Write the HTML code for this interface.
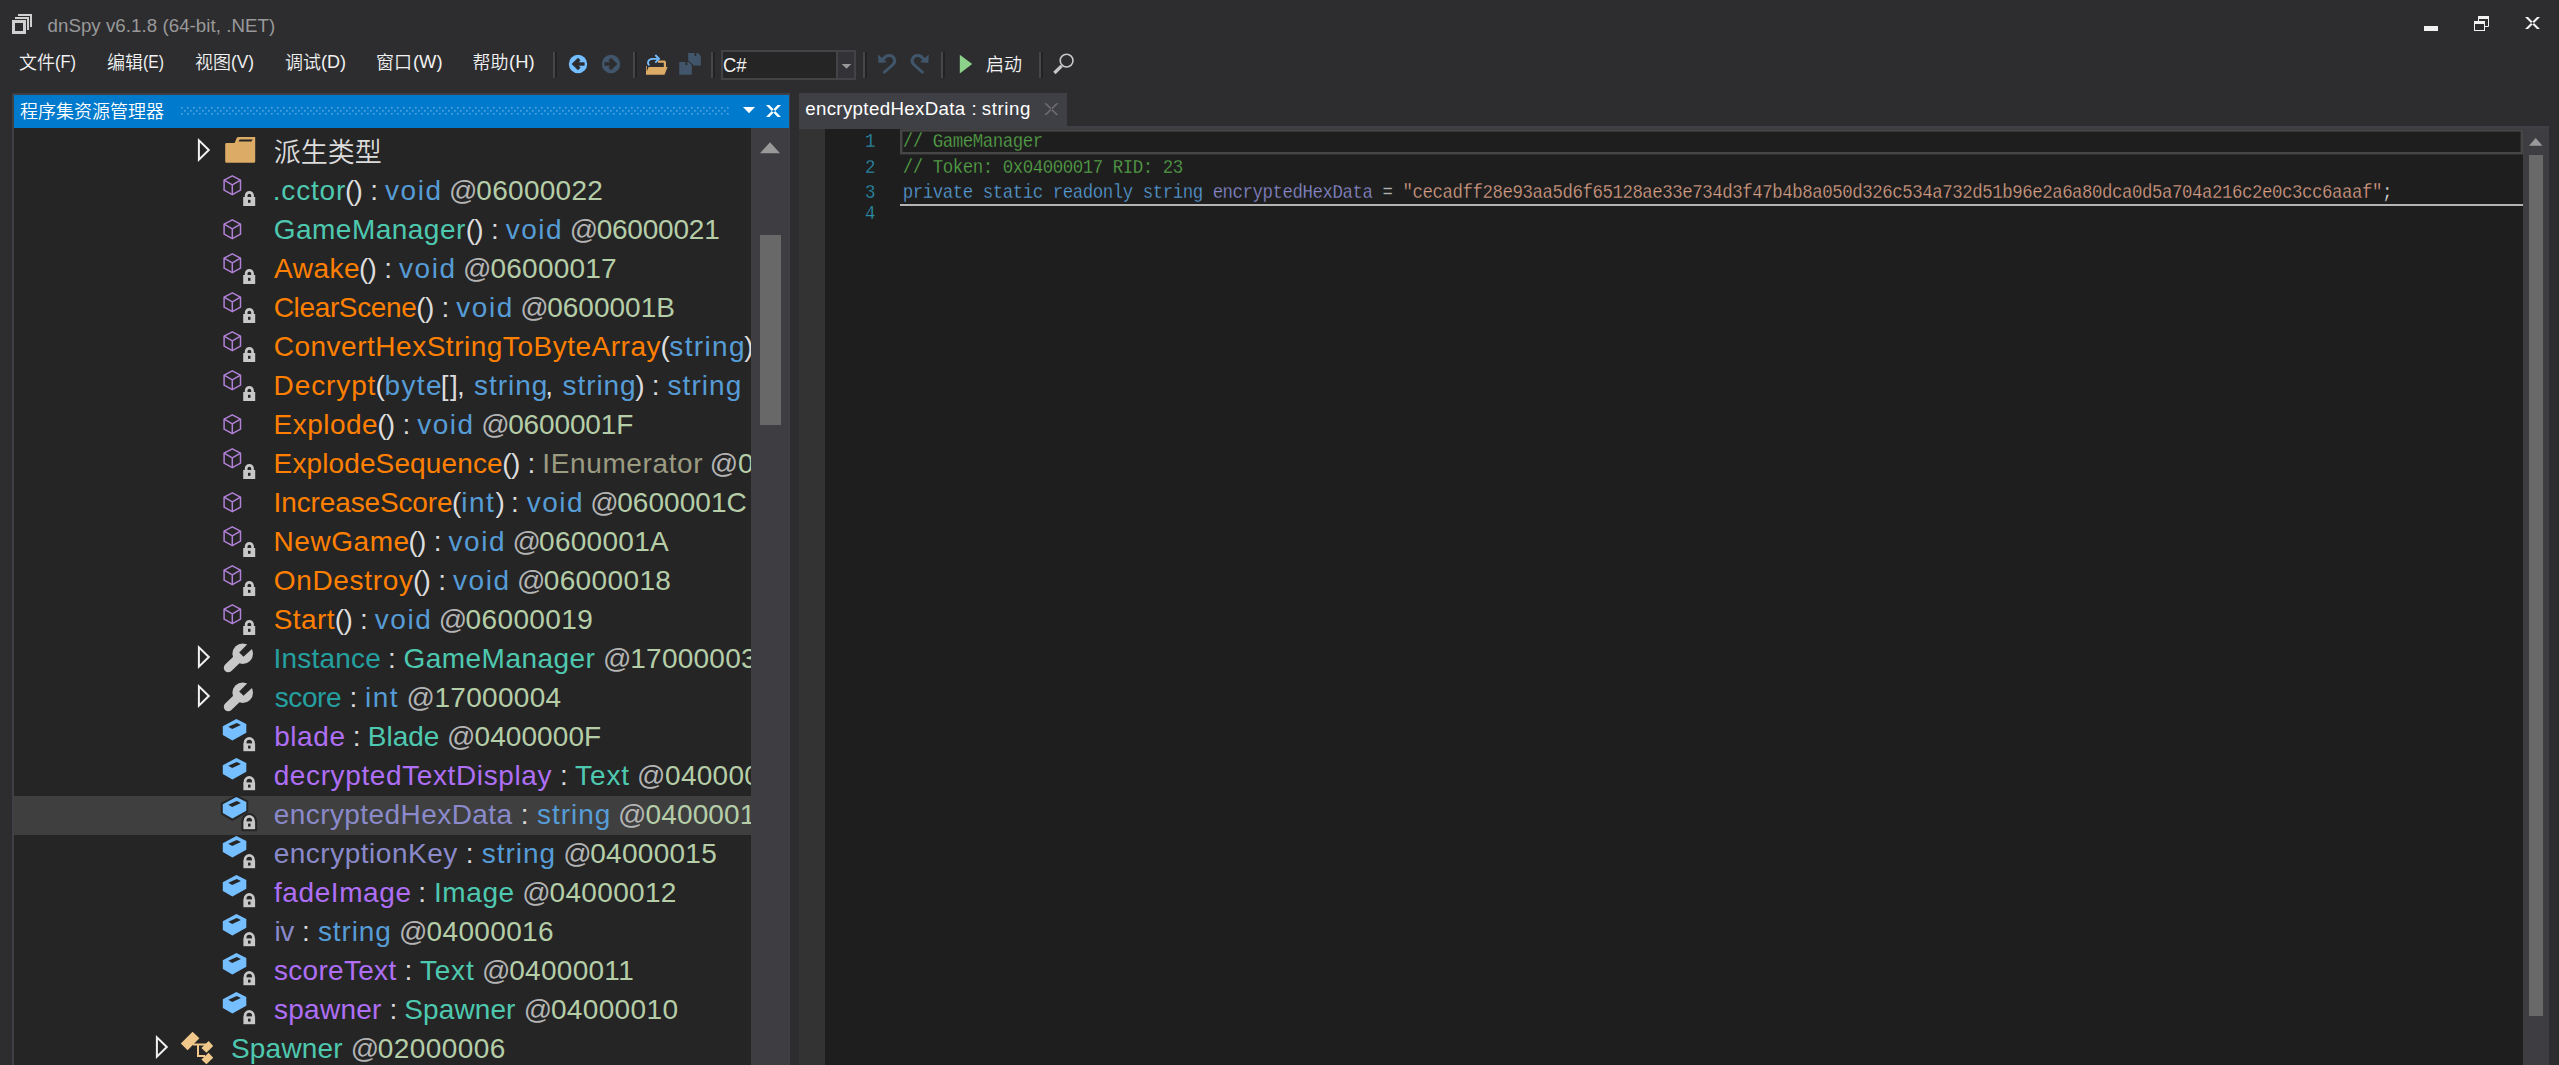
<!DOCTYPE html>
<html lang="zh-CN"><head><meta charset="utf-8"><title>dnSpy v6.1.8 (64-bit, .NET)</title>
<style>
html,body{margin:0;padding:0;background:#2d2d30}
body{width:2559px;height:1065px;position:relative;overflow:hidden;font-family:"Liberation Sans", sans-serif}
#shapes{position:absolute;left:0;top:0}
.ln{position:absolute;white-space:pre;font-family:"Liberation Sans", sans-serif}
#tree{position:absolute;left:0;top:128px;width:751px;height:937px;overflow:hidden}
.c{position:absolute;white-space:pre;font-family:"Liberation Mono", monospace;font-size:17.4px;line-height:24px;letter-spacing:-0.442px;transform:scaleY(1.16);transform-origin:0 16.65px;-webkit-text-stroke:0.25px #1e1e1e}
</style></head>
<body>
<svg id="shapes" width="2559" height="1065" viewBox="0 0 2559 1065">
<g fill="none" stroke="#d0d0d0"><rect x="13.5" y="21.5" width="11" height="11" stroke-width="3"/><path d="M15 18H28V30" stroke-width="2"/><path d="M18 15H31V27" stroke-width="2"/></g>
<rect x="2424" y="26" width="14" height="5" fill="#f1f1f1" />
<g fill="none" stroke="#f1f1f1" stroke-width="1"><rect x="2474.5" y="21.5" width="10" height="9"/><rect x="2474" y="21" width="11" height="3" fill="#f1f1f1" stroke="none"/><path d="M2478.5 21V16.5H2488.5V26.5H2485"/><rect x="2478" y="16" width="11" height="3" fill="#f1f1f1" stroke="none"/></g>
<path d="M2525 17H2528L2540 29H2537ZM2540 17H2537L2525 29H2528Z" fill="#f1f1f1"/>
<rect x="553" y="52" width="2" height="26" fill="#46464a" />
<rect x="555" y="52" width="2" height="26" fill="#222224" />
<rect x="633" y="52" width="2" height="26" fill="#46464a" />
<rect x="635" y="52" width="2" height="26" fill="#222224" />
<rect x="711" y="52" width="2" height="26" fill="#46464a" />
<rect x="713" y="52" width="2" height="26" fill="#222224" />
<rect x="863" y="52" width="2" height="26" fill="#46464a" />
<rect x="865" y="52" width="2" height="26" fill="#222224" />
<rect x="941" y="52" width="2" height="26" fill="#46464a" />
<rect x="943" y="52" width="2" height="26" fill="#222224" />
<rect x="1039" y="52" width="2" height="26" fill="#46464a" />
<rect x="1041" y="52" width="2" height="26" fill="#222224" />
<circle cx="578" cy="64" r="9.2" fill="#75beff"/><path d="M571.6 64L578 57.8L580.6 60.4L578.6 62.3H584.6V65.7H578.6L580.6 67.6L578 70.2Z" fill="#2d2d30"/>
<circle cx="611" cy="64" r="9.2" fill="#41566b"/><path d="M617.4 64L611 57.8L608.4 60.4L610.4 62.3H604.4V65.7H610.4L608.4 67.6L611 70.2Z" fill="#2d2d30"/>
<g><path d="M646 66V74.8H664.5L667.6 67H666V62.5Q666 60.6 664.4 60.6H658V62.8H663.8V67H648.6L646.8 71.5V66Z" fill="#dcab65"/><path d="M649.3 65.3C646.5 62.6 648.5 58.8 652.5 58.8H657.5" fill="none" stroke="#75beff" stroke-width="1.8"/><path d="M655.3 55L659 58.8L655.3 62.6" fill="none" stroke="#75beff" stroke-width="1.8"/></g>
<path d="M688.2 53H697.8000000000001L700.8000000000001 56V65.6H688.2Z" fill="#41566b"/><rect x="694.5" y="53" width="1.8" height="3" fill="#2d2d30"/>
<rect x="677.8" y="60.6" width="15" height="15" fill="#2d2d30" opacity="0"/>
<path d="M678.3 61H689L693 64.5V76H678.3Z" fill="#2d2d30"/>
<path d="M679.2 62.1H688.8000000000001L691.8000000000001 65.1V74.7H679.2Z" fill="#41566b"/><rect x="685.5" y="62.1" width="1.8" height="3" fill="#2d2d30"/>
<rect x="721" y="50" width="135" height="30" fill="#434346" />
<rect x="723" y="52" width="113" height="26" fill="#252526" />
<rect x="838" y="52" width="16" height="26" fill="#333337" />
<path d="M841.7 63.9H851.3L846.5 68.8Z" fill="#999999"/>
<g fill="none" stroke="#41566b" stroke-width="3"><path d="M883.5 73L893 64.5C896.8 60.8 893.5 55.6 889.5 55.6C886.5 55.6 884 57.6 882.8 60"/><path d="M923.3 73L913.8 64.5C910 60.8 913.3 55.6 917.3 55.6C920.3 55.6 922.8 57.6 924 60"/></g><path d="M878 54.5L878.5 63L887 62.2Z" fill="#41566b"/><path d="M928.8 54.5L928.3 63L919.8 62.2Z" fill="#41566b"/>
<path d="M959.8 54.8V73.4L972.2 64.1Z" fill="#8dd28a"/>
<circle cx="1066.6" cy="60.6" r="6.4" fill="none" stroke="#c8c8c8" stroke-width="1.6"/><path d="M1061.6 65.8L1054.4 73" stroke="#c8c8c8" stroke-width="3.2" fill="none"/>
<rect x="12" y="93" width="778" height="972" fill="#3f3f46" />
<rect x="14" y="95" width="775" height="33" fill="#007acc" />
<rect x="14" y="128" width="737" height="937" fill="#252526" />
<rect x="751" y="128" width="38" height="937" fill="#3e3e42" />
<defs><pattern id="grip" x="181" y="107" width="6" height="6" patternUnits="userSpaceOnUse"><rect x="0" y="0" width="1.6" height="1.6" fill="#55a6de"/><rect x="3" y="3" width="1.6" height="1.6" fill="#55a6de"/></pattern></defs><rect x="181" y="107" width="548.6" height="8" fill="url(#grip)"/>
<path d="M743 107H755L749 113.2Z" fill="#ffffff"/>
<path d="M766 105H769.4L781 117H777.6ZM781 105H777.6L766 117H769.4Z" fill="#ffffff"/>
<path d="M760 153.2L770 142.3L780 153.2Z" fill="#999999"/>
<rect x="760" y="235" width="21" height="190" fill="#686868" />
<rect x="14" y="796" width="737" height="39" fill="#3f3f40" />
<path d="M198.9 140.3V159.7L208.8 150Z" fill="none" stroke="#f1f1f1" stroke-width="2" stroke-linejoin="miter"/>
<path d="M226.6 143H234.6L236.6 138.2Q237 137 238.4 137H255.2V161.4Q255.2 162.8 253.8 162.8H226.6Q225.2 162.8 225.2 161.4V144.4Q225.2 143 226.6 143Z" fill="#dcab65"/><path d="M239.6 139.6H252.6L251.4 141.6H238.6Z" fill="#252526"/>
<g fill="none" stroke="#b180d7" stroke-width="1.5" stroke-linejoin="round"><path d="M232.3 175.8L240.5 180.2V190.2L232.3 194.7L224.1 190.2V180.2Z"/><path d="M224.1 180.2L232.3 184.8L240.5 180.2M232.3 184.8V194.7"/></g>
<g><rect x="243.2" y="197" width="12" height="9" fill="#c8c8c8"/><path d="M246.15 198V195.55A3.200000000000003 3.200000000000003 0 0 1 252.55 195.55V198" fill="none" stroke="#c8c8c8" stroke-width="2.7"/><rect x="248.0" y="199.8" width="2.5" height="3" fill="#252526"/></g>
<g fill="none" stroke="#b180d7" stroke-width="1.5" stroke-linejoin="round"><path d="M232.3 219.8L240.5 224.2V234.2L232.3 238.7L224.1 234.2V224.2Z"/><path d="M224.1 224.2L232.3 228.8L240.5 224.2M232.3 228.8V238.7"/></g>
<g fill="none" stroke="#b180d7" stroke-width="1.5" stroke-linejoin="round"><path d="M232.3 253.8L240.5 258.2V268.2L232.3 272.7L224.1 268.2V258.2Z"/><path d="M224.1 258.2L232.3 262.8L240.5 258.2M232.3 262.8V272.7"/></g>
<g><rect x="243.2" y="275" width="12" height="9" fill="#c8c8c8"/><path d="M246.15 276V273.55A3.200000000000003 3.200000000000003 0 0 1 252.55 273.55V276" fill="none" stroke="#c8c8c8" stroke-width="2.7"/><rect x="248.0" y="277.8" width="2.5" height="3" fill="#252526"/></g>
<g fill="none" stroke="#b180d7" stroke-width="1.5" stroke-linejoin="round"><path d="M232.3 292.8L240.5 297.2V307.2L232.3 311.7L224.1 307.2V297.2Z"/><path d="M224.1 297.2L232.3 301.8L240.5 297.2M232.3 301.8V311.7"/></g>
<g><rect x="243.2" y="314" width="12" height="9" fill="#c8c8c8"/><path d="M246.15 315V312.55A3.200000000000003 3.200000000000003 0 0 1 252.55 312.55V315" fill="none" stroke="#c8c8c8" stroke-width="2.7"/><rect x="248.0" y="316.8" width="2.5" height="3" fill="#252526"/></g>
<g fill="none" stroke="#b180d7" stroke-width="1.5" stroke-linejoin="round"><path d="M232.3 414.8L240.5 419.2V429.2L232.3 433.7L224.1 429.2V419.2Z"/><path d="M224.1 419.2L232.3 423.8L240.5 419.2M232.3 423.8V433.7"/></g>
<g fill="none" stroke="#b180d7" stroke-width="1.5" stroke-linejoin="round"><path d="M232.3 526.8L240.5 531.2V541.2L232.3 545.7L224.1 541.2V531.2Z"/><path d="M224.1 531.2L232.3 535.8L240.5 531.2M232.3 535.8V545.7"/></g>
<g><rect x="243.2" y="548" width="12" height="9" fill="#c8c8c8"/><path d="M246.15 549V546.5500000000001A3.200000000000003 3.200000000000003 0 0 1 252.55 546.5500000000001V549" fill="none" stroke="#c8c8c8" stroke-width="2.7"/><rect x="248.0" y="550.8" width="2.5" height="3" fill="#252526"/></g>
<g fill="none" stroke="#b180d7" stroke-width="1.5" stroke-linejoin="round"><path d="M232.3 565.8L240.5 570.2V580.2L232.3 584.7L224.1 580.2V570.2Z"/><path d="M224.1 570.2L232.3 574.8L240.5 570.2M232.3 574.8V584.7"/></g>
<g><rect x="243.2" y="587" width="12" height="9" fill="#c8c8c8"/><path d="M246.15 588V585.5500000000001A3.200000000000003 3.200000000000003 0 0 1 252.55 585.5500000000001V588" fill="none" stroke="#c8c8c8" stroke-width="2.7"/><rect x="248.0" y="589.8" width="2.5" height="3" fill="#252526"/></g>
<g fill="none" stroke="#b180d7" stroke-width="1.5" stroke-linejoin="round"><path d="M232.3 604.8L240.5 609.2V619.2L232.3 623.7L224.1 619.2V609.2Z"/><path d="M224.1 609.2L232.3 613.8L240.5 609.2M232.3 613.8V623.7"/></g>
<g><rect x="243.2" y="626" width="12" height="9" fill="#c8c8c8"/><path d="M246.15 627V624.5500000000001A3.200000000000003 3.200000000000003 0 0 1 252.55 624.5500000000001V627" fill="none" stroke="#c8c8c8" stroke-width="2.7"/><rect x="248.0" y="628.8" width="2.5" height="3" fill="#252526"/></g>
<g fill="none" stroke="#b180d7" stroke-width="1.5" stroke-linejoin="round"><path d="M232.3 331.8L240.5 336.2V346.2L232.3 350.7L224.1 346.2V336.2Z"/><path d="M224.1 336.2L232.3 340.8L240.5 336.2M232.3 340.8V350.7"/></g>
<g><rect x="243.2" y="353" width="12" height="9" fill="#c8c8c8"/><path d="M246.15 354V351.55A3.200000000000003 3.200000000000003 0 0 1 252.55 351.55V354" fill="none" stroke="#c8c8c8" stroke-width="2.7"/><rect x="248.0" y="355.8" width="2.5" height="3" fill="#252526"/></g>
<g fill="none" stroke="#b180d7" stroke-width="1.5" stroke-linejoin="round"><path d="M232.3 370.8L240.5 375.2V385.2L232.3 389.7L224.1 385.2V375.2Z"/><path d="M224.1 375.2L232.3 379.8L240.5 375.2M232.3 379.8V389.7"/></g>
<g><rect x="243.2" y="392" width="12" height="9" fill="#c8c8c8"/><path d="M246.15 393V390.55A3.200000000000003 3.200000000000003 0 0 1 252.55 390.55V393" fill="none" stroke="#c8c8c8" stroke-width="2.7"/><rect x="248.0" y="394.8" width="2.5" height="3" fill="#252526"/></g>
<g fill="none" stroke="#b180d7" stroke-width="1.5" stroke-linejoin="round"><path d="M232.3 448.8L240.5 453.2V463.2L232.3 467.7L224.1 463.2V453.2Z"/><path d="M224.1 453.2L232.3 457.8L240.5 453.2M232.3 457.8V467.7"/></g>
<g><rect x="243.2" y="470" width="12" height="9" fill="#c8c8c8"/><path d="M246.15 471V468.55A3.200000000000003 3.200000000000003 0 0 1 252.55 468.55V471" fill="none" stroke="#c8c8c8" stroke-width="2.7"/><rect x="248.0" y="472.8" width="2.5" height="3" fill="#252526"/></g>
<g fill="none" stroke="#b180d7" stroke-width="1.5" stroke-linejoin="round"><path d="M232.3 492.8L240.5 497.2V507.2L232.3 511.7L224.1 507.2V497.2Z"/><path d="M224.1 497.2L232.3 501.8L240.5 497.2M232.3 501.8V511.7"/></g>
<path d="M198.9 647.3V666.7L208.8 657Z" fill="none" stroke="#f1f1f1" stroke-width="2" stroke-linejoin="miter"/>
<g><path d="M228.3 667.8L240 656.5" stroke="#c8c8c8" stroke-width="9" stroke-linecap="round" fill="none"/><circle cx="242.7" cy="653.7" r="10.3" fill="#c8c8c8"/><path d="M239.2 652.4L252.1 639.5L257.4 644L243.5 656.7Z" fill="#252526"/></g>
<path d="M198.9 686.3V705.7L208.8 696Z" fill="none" stroke="#f1f1f1" stroke-width="2" stroke-linejoin="miter"/>
<g><path d="M228.3 706.8L240 695.5" stroke="#c8c8c8" stroke-width="9" stroke-linecap="round" fill="none"/><circle cx="242.7" cy="692.7" r="10.3" fill="#c8c8c8"/><path d="M239.2 691.4L252.1 678.5L257.4 683L243.5 695.7Z" fill="#252526"/></g>
<path d="M236.4 719L246.3 724V732.8L232.4 740.6L222.8 735V726.2Z" fill="#75beff"/><path d="M228.3 726.7L236.8 722.9L240.9 724.9L232.2 729.1Z" fill="#252526"/>
<g><rect x="243.4" y="743.4" width="11.7" height="7.8" fill="#c8c8c8"/><path d="M245.1 744.4V742.55A4.150000000000006 4.150000000000006 0 0 1 253.4 742.55V744.4" fill="none" stroke="#c8c8c8" stroke-width="2.8"/><rect x="248.05" y="745.5999999999999" width="2.5" height="3" fill="#252526"/></g>
<path d="M236.4 758L246.3 763V771.8L232.4 779.6L222.8 774V765.2Z" fill="#75beff"/><path d="M228.3 765.7L236.8 761.9L240.9 763.9L232.2 768.1Z" fill="#252526"/>
<g><rect x="243.4" y="782.4" width="11.7" height="7.8" fill="#c8c8c8"/><path d="M245.1 783.4V781.55A4.150000000000006 4.150000000000006 0 0 1 253.4 781.55V783.4" fill="none" stroke="#c8c8c8" stroke-width="2.8"/><rect x="248.05" y="784.5999999999999" width="2.5" height="3" fill="#252526"/></g>
<path d="M236.4 797L246.3 802V810.8L232.4 818.6L222.8 813V804.2Z" fill="#75beff" stroke="#252526" stroke-width="4" paint-order="stroke" stroke-linejoin="miter"/><path d="M228.3 804.7L236.8 800.9L240.9 802.9L232.2 807.1Z" fill="#252526"/>
<g><path d="M245.1 822.4V820.55A4.150000000000006 4.150000000000006 0 0 1 253.4 820.55V822.4" fill="none" stroke="#252526" stroke-width="6.8"/><rect x="241.4" y="820.4" width="15.7" height="10.8" fill="#252526"/><rect x="243.4" y="821.4" width="11.7" height="7.8" fill="#c8c8c8"/><path d="M245.1 822.4V820.55A4.150000000000006 4.150000000000006 0 0 1 253.4 820.55V822.4" fill="none" stroke="#c8c8c8" stroke-width="2.8"/><rect x="248.05" y="823.5999999999999" width="2.5" height="3" fill="#252526"/></g>
<path d="M236.4 836L246.3 841V849.8L232.4 857.6L222.8 852V843.2Z" fill="#75beff"/><path d="M228.3 843.7L236.8 839.9L240.9 841.9L232.2 846.1Z" fill="#252526"/>
<g><rect x="243.4" y="860.4" width="11.7" height="7.8" fill="#c8c8c8"/><path d="M245.1 861.4V859.55A4.150000000000006 4.150000000000006 0 0 1 253.4 859.55V861.4" fill="none" stroke="#c8c8c8" stroke-width="2.8"/><rect x="248.05" y="862.5999999999999" width="2.5" height="3" fill="#252526"/></g>
<path d="M236.4 875L246.3 880V888.8L232.4 896.6L222.8 891V882.2Z" fill="#75beff"/><path d="M228.3 882.7L236.8 878.9L240.9 880.9L232.2 885.1Z" fill="#252526"/>
<g><rect x="243.4" y="899.4" width="11.7" height="7.8" fill="#c8c8c8"/><path d="M245.1 900.4V898.55A4.150000000000006 4.150000000000006 0 0 1 253.4 898.55V900.4" fill="none" stroke="#c8c8c8" stroke-width="2.8"/><rect x="248.05" y="901.5999999999999" width="2.5" height="3" fill="#252526"/></g>
<path d="M236.4 914L246.3 919V927.8L232.4 935.6L222.8 930V921.2Z" fill="#75beff"/><path d="M228.3 921.7L236.8 917.9L240.9 919.9L232.2 924.1Z" fill="#252526"/>
<g><rect x="243.4" y="938.4" width="11.7" height="7.8" fill="#c8c8c8"/><path d="M245.1 939.4V937.55A4.150000000000006 4.150000000000006 0 0 1 253.4 937.55V939.4" fill="none" stroke="#c8c8c8" stroke-width="2.8"/><rect x="248.05" y="940.5999999999999" width="2.5" height="3" fill="#252526"/></g>
<path d="M236.4 953L246.3 958V966.8L232.4 974.6L222.8 969V960.2Z" fill="#75beff"/><path d="M228.3 960.7L236.8 956.9L240.9 958.9L232.2 963.1Z" fill="#252526"/>
<g><rect x="243.4" y="977.4" width="11.7" height="7.8" fill="#c8c8c8"/><path d="M245.1 978.4V976.55A4.150000000000006 4.150000000000006 0 0 1 253.4 976.55V978.4" fill="none" stroke="#c8c8c8" stroke-width="2.8"/><rect x="248.05" y="979.5999999999999" width="2.5" height="3" fill="#252526"/></g>
<path d="M236.4 992L246.3 997V1005.8L232.4 1013.6L222.8 1008V999.2Z" fill="#75beff"/><path d="M228.3 999.7L236.8 995.9L240.9 997.9L232.2 1002.1Z" fill="#252526"/>
<g><rect x="243.4" y="1016.4" width="11.7" height="7.8" fill="#c8c8c8"/><path d="M245.1 1017.4V1015.55A4.150000000000006 4.150000000000006 0 0 1 253.4 1015.55V1017.4" fill="none" stroke="#c8c8c8" stroke-width="2.8"/><rect x="248.05" y="1018.5999999999999" width="2.5" height="3" fill="#252526"/></g>
<path d="M156.9 1037.3V1056.7L166.8 1047Z" fill="none" stroke="#f1f1f1" stroke-width="2" stroke-linejoin="miter"/>
<g fill="#f0c88c"><path d="M192.6 1031.8L199.4 1038.2L187.6 1050.2L180.8 1043.6Z"/><path d="M208.6 1041L213.2 1046L206.4 1052.8L201.4 1048Z"/><path d="M208.6 1052.8L213.2 1057.8L206.4 1064.2L201.4 1059.6Z"/><path d="M193 1043.4H207V1045.4H199V1055H205V1057H197V1045.4H193Z"/></g>
<rect x="799" y="93" width="268" height="34" fill="#3f3f46" />
<rect x="799" y="126" width="1750" height="3" fill="#3f3f46" />
<rect x="799" y="129" width="26" height="936" fill="#333333" />
<rect x="825" y="129" width="1698" height="936" fill="#1e1e1e" />
<rect x="2523" y="129" width="26" height="936" fill="#3e3e42" />
<path d="M1044.2 103.2H1046.5L1058.5 114.9H1056.2ZM1058.5 103.2H1056.2L1044.2 114.9H1046.5Z" fill="#6d6d70"/>
<rect x="901.2" y="130.4" width="1620.6" height="22.8" fill="none" stroke="#464646" stroke-width="2.4"/>
<rect x="900" y="204" width="1623" height="2" fill="#b4b4b4" />
<path d="M2529 145.8L2535.7 138L2542.4 145.8Z" fill="#999999"/>
<rect x="2529" y="155" width="14" height="861" fill="#686868" />
</svg>
<div id="chrome">
<div class="ln" style="left:47.50px;top:11.72px;font-size:18.7px;line-height:28px"><span style='color:#999999;letter-spacing:0.050px;'>dnSpy v6.1.8 (64-bit, .NET)</span></div>
<div class="ln" style="left:19.00px;top:48.86px;font-size:18px;line-height:27px"><span style='color:#f1f1f1;font-family:"Liberation Sans", "Noto Sans CJK SC", sans-serif;font-weight:350;'>文件</span><span style='margin-left:0.34px;color:#f1f1f1;font-size:19px;display:inline-block;line-height:27px;transform:scaleX(0.8634);transform-origin:0 0;position:relative;top:-0.60px;'>(F)</span> <span style='margin-left:22.40px;color:#f1f1f1;font-family:"Liberation Sans", "Noto Sans CJK SC", sans-serif;font-weight:350;'>编辑</span><span style='margin-left:0.38px;color:#f1f1f1;font-size:19px;display:inline-block;line-height:27px;transform:scaleX(0.8250);transform-origin:0 0;position:relative;top:-0.60px;'>(E)</span> <span style='margin-left:21.29px;color:#f1f1f1;font-family:"Liberation Sans", "Noto Sans CJK SC", sans-serif;font-weight:350;'>视图</span><span style='margin-left:0.29px;color:#f1f1f1;font-size:19px;display:inline-block;line-height:27px;transform:scaleX(0.9083);transform-origin:0 0;position:relative;top:-0.60px;'>(V)</span> <span style='margin-left:23.38px;color:#f1f1f1;font-family:"Liberation Sans", "Noto Sans CJK SC", sans-serif;font-weight:350;'>调试</span><span style='margin-left:0.25px;color:#f1f1f1;font-size:19px;display:inline-block;line-height:27px;transform:scaleX(0.9502);transform-origin:0 0;position:relative;top:-0.60px;'>(D)</span> <span style='margin-left:23.37px;color:#f1f1f1;font-family:"Liberation Sans", "Noto Sans CJK SC", sans-serif;font-weight:350;'>窗口</span><span style='margin-left:1.23px;color:#f1f1f1;font-size:19px;display:inline-block;line-height:27px;transform:scaleX(0.9672);transform-origin:0 0;position:relative;top:-0.60px;'>(W)</span> <span style='margin-left:23.67px;color:#f1f1f1;font-family:"Liberation Sans", "Noto Sans CJK SC", sans-serif;font-weight:350;'>帮助</span><span style='margin-left:0.23px;color:#f1f1f1;font-size:19px;display:inline-block;line-height:27px;transform:scaleX(0.9701);transform-origin:0 0;position:relative;top:-0.60px;'>(H)</span></div>
<div class="ln" style="left:723.36px;top:50.71px;font-size:19.6px;line-height:29px"><span style='color:#f1f1f1;display:inline-block;line-height:29px;transform:scaleX(0.9400);transform-origin:0 0;'>C#</span></div>
<div class="ln" style="left:986.00px;top:52.36px;font-size:18px;line-height:27px"><span style='color:#f1f1f1;font-family:"Liberation Sans", "Noto Sans CJK SC", sans-serif;font-weight:350;'>启动</span></div>
<div class="ln" style="left:805.20px;top:95.22px;font-size:18.7px;line-height:28px"><span style='color:#ffffff;letter-spacing:0.348px;'>encryptedHexData</span> <span style='margin-left:0.76px;color:#ffffff;'>:</span> <span style='margin-left:-0.19px;color:#ffffff;letter-spacing:0.619px;'>string</span></div>
<div class="ln" style="left:20.00px;top:98.56px;font-size:18px;line-height:27px"><span style='color:#ffffff;font-family:"Liberation Sans", "Noto Sans CJK SC", sans-serif;font-weight:350;'>程序集资源管理器</span></div>
</div>
<div id="tree">
<div class="ln" style="left:273.70px;top:5.34px;font-size:27px;line-height:40px"><span style='color:#dcdcdc;font-family:"Liberation Sans", "Noto Sans CJK SC", sans-serif;font-weight:350;'>派生类型</span></div>
<div class="ln" style="left:272.70px;top:41.50px;font-size:28px;line-height:42px"><span style='color:#4ec9b0;letter-spacing:0.834px;'>.cctor</span><span style='margin-left:-1.16px;color:#dcdcdc;letter-spacing:-0.724px;'>()</span> <span style='margin-left:0.31px;color:#dcdcdc;'>:</span> <span style='margin-left:-0.87px;color:#569cd6;letter-spacing:1.536px;'>void</span> <span style='margin-left:-1.29px;color:#b4b4b4;'>@</span><span style='margin-left:-1.12px;color:#b5cea8;letter-spacing:0.285px;'>06000022</span></div>
<div class="ln" style="left:273.70px;top:80.50px;font-size:28px;line-height:42px"><span style='color:#4ec9b0;letter-spacing:0.487px;'>GameManager</span><span style='margin-left:-0.11px;color:#dcdcdc;letter-spacing:-0.724px;'>()</span> <span style='margin-left:0.31px;color:#dcdcdc;'>:</span> <span style='margin-left:-0.87px;color:#569cd6;letter-spacing:1.536px;'>void</span> <span style='margin-left:-1.29px;color:#b4b4b4;'>@</span><span style='margin-left:-1.52px;color:#b5cea8;letter-spacing:-0.201px;'>06000021</span></div>
<div class="ln" style="left:274.00px;top:119.50px;font-size:28px;line-height:42px"><span style='color:#ff8000;letter-spacing:0.509px;'>Awake</span><span style='margin-left:-1.08px;color:#dcdcdc;letter-spacing:-0.724px;'>()</span> <span style='margin-left:0.31px;color:#dcdcdc;'>:</span> <span style='margin-left:-0.87px;color:#569cd6;letter-spacing:1.536px;'>void</span> <span style='margin-left:-1.29px;color:#b4b4b4;'>@</span><span style='margin-left:-0.92px;color:#b5cea8;letter-spacing:0.213px;'>06000017</span></div>
<div class="ln" style="left:273.70px;top:158.50px;font-size:28px;line-height:42px"><span style='color:#ff8000;letter-spacing:-0.348px;'>ClearScene</span><span style='margin-left:-0.22px;color:#dcdcdc;letter-spacing:-0.724px;'>()</span> <span style='margin-left:0.31px;color:#dcdcdc;'>:</span> <span style='margin-left:-0.87px;color:#569cd6;letter-spacing:1.536px;'>void</span> <span style='margin-left:-1.29px;color:#b4b4b4;'>@</span><span style='margin-left:-1.52px;color:#b5cea8;'>0600001B</span></div>
<div class="ln" style="left:273.70px;top:197.50px;font-size:28px;line-height:42px"><span style='color:#ff8000;letter-spacing:0.513px;'>ConvertHexStringToByteArray</span><span style='margin-left:-0.51px;color:#dcdcdc;'>(</span><span style='margin-left:-0.52px;color:#569cd6;letter-spacing:1.361px;'>string</span><span style='margin-left:-1.73px;color:#dcdcdc;'>)</span></div>
<div class="ln" style="left:273.60px;top:236.50px;font-size:28px;line-height:42px"><span style='color:#ff8000;letter-spacing:0.885px;'>Decrypt</span><span style='margin-left:-0.66px;color:#dcdcdc;'>(</span><span style='margin-left:-0.52px;color:#569cd6;letter-spacing:1.416px;'>byte</span><span style='margin-left:-2.29px;color:#dcdcdc;letter-spacing:1.521px;'>[]</span><span style='margin-left:-2.40px;color:#dcdcdc;'>,</span> <span style='margin-left:1.53px;color:#569cd6;letter-spacing:0.981px;'>string</span><span style='margin-left:-3.15px;color:#dcdcdc;'>,</span> <span style='margin-left:1.73px;color:#569cd6;letter-spacing:0.921px;'>string</span><span style='margin-left:-1.39px;color:#dcdcdc;'>)</span> <span style='margin-left:-0.51px;color:#dcdcdc;'>:</span> <span style='margin-left:0.13px;color:#569cd6;letter-spacing:1.081px;'>string</span></div>
<div class="ln" style="left:273.60px;top:275.50px;font-size:28px;line-height:42px"><span style='color:#ff8000;letter-spacing:0.464px;'>Explode</span><span style='margin-left:-0.84px;color:#dcdcdc;letter-spacing:-0.724px;'>()</span> <span style='margin-left:0.31px;color:#dcdcdc;'>:</span> <span style='margin-left:-0.87px;color:#569cd6;letter-spacing:1.536px;'>void</span> <span style='margin-left:-1.29px;color:#b4b4b4;'>@</span><span style='margin-left:-1.52px;color:#b5cea8;letter-spacing:-0.129px;'>0600001F</span></div>
<div class="ln" style="left:273.60px;top:314.50px;font-size:28px;line-height:42px"><span style='color:#ff8000;letter-spacing:0.120px;'>ExplodeSequence</span><span style='margin-left:-0.39px;color:#dcdcdc;letter-spacing:-0.724px;'>()</span> <span style='margin-left:0.31px;color:#dcdcdc;'>:</span> <span style='margin-left:-0.87px;color:#9b9b82;letter-spacing:0.616px;'>IEnumerator</span> <span style='margin-left:-1.13px;color:#b4b4b4;'>@</span><span style='margin-left:-0.22px;color:#b5cea8;letter-spacing:-0.144px;'>0600001E</span></div>
<div class="ln" style="left:273.60px;top:353.50px;font-size:28px;line-height:42px"><span style='color:#ff8000;letter-spacing:-0.130px;'>IncreaseScore</span><span style='margin-left:-0.44px;color:#dcdcdc;'>(</span><span style='margin-left:-0.12px;color:#569cd6;letter-spacing:1.504px;'>int</span><span style='margin-left:0.12px;color:#dcdcdc;'>)</span> <span style='margin-left:-1.51px;color:#dcdcdc;'>:</span> <span style='margin-left:0.13px;color:#569cd6;letter-spacing:1.502px;'>void</span> <span style='margin-left:-1.66px;color:#b4b4b4;'>@</span><span style='margin-left:-1.52px;color:#b5cea8;letter-spacing:0.056px;'>0600001C</span></div>
<div class="ln" style="left:273.60px;top:392.50px;font-size:28px;line-height:42px"><span style='color:#ff8000;letter-spacing:0.535px;'>NewGame</span><span style='margin-left:-1.11px;color:#dcdcdc;letter-spacing:-0.724px;'>()</span> <span style='margin-left:0.31px;color:#dcdcdc;'>:</span> <span style='margin-left:-0.87px;color:#569cd6;letter-spacing:1.536px;'>void</span> <span style='margin-left:-1.29px;color:#b4b4b4;'>@</span><span style='margin-left:-1.92px;color:#b5cea8;letter-spacing:0.285px;'>0600001A</span></div>
<div class="ln" style="left:273.70px;top:431.50px;font-size:28px;line-height:42px"><span style='color:#ff8000;letter-spacing:0.685px;'>OnDestroy</span><span style='margin-left:-0.68px;color:#dcdcdc;letter-spacing:-0.724px;'>()</span> <span style='margin-left:0.31px;color:#dcdcdc;'>:</span> <span style='margin-left:-0.87px;color:#569cd6;letter-spacing:1.536px;'>void</span> <span style='margin-left:-1.29px;color:#b4b4b4;'>@</span><span style='margin-left:-1.72px;color:#b5cea8;letter-spacing:0.371px;'>06000018</span></div>
<div class="ln" style="left:273.70px;top:470.50px;font-size:28px;line-height:42px"><span style='color:#ff8000;letter-spacing:0.437px;'>Start</span><span style='margin-left:-0.22px;color:#dcdcdc;letter-spacing:-0.724px;'>()</span> <span style='margin-left:0.31px;color:#dcdcdc;'>:</span> <span style='margin-left:-0.87px;color:#569cd6;letter-spacing:1.536px;'>void</span> <span style='margin-left:-1.29px;color:#b4b4b4;'>@</span><span style='margin-left:-1.72px;color:#b5cea8;letter-spacing:0.385px;'>06000019</span></div>
<div class="ln" style="left:273.60px;top:509.50px;font-size:28px;line-height:42px"><span style='color:#25a0a0;letter-spacing:0.189px;'>Instance</span> <span style='margin-left:-0.75px;color:#dcdcdc;'>:</span> <span style='margin-left:0.03px;color:#4ec9b0;letter-spacing:0.447px;'>GameManager</span> <span style='margin-left:-0.16px;color:#b4b4b4;'>@</span><span style='margin-left:-1.12px;color:#b5cea8;letter-spacing:0.256px;'>17000003</span></div>
<div class="ln" style="left:274.70px;top:548.50px;font-size:28px;line-height:42px"><span style='color:#25a0a0;letter-spacing:-0.399px;'>score</span> <span style='margin-left:0.44px;color:#dcdcdc;'>:</span> <span style='margin-left:0.13px;color:#569cd6;letter-spacing:1.404px;'>int</span> <span style='margin-left:-0.17px;color:#b4b4b4;'>@</span><span style='margin-left:-0.52px;color:#b5cea8;letter-spacing:0.299px;'>17000004</span></div>
<div class="ln" style="left:274.20px;top:587.50px;font-size:28px;line-height:42px"><span style='color:#ae6ff5;letter-spacing:0.566px;'>blade</span> <span style='margin-left:-0.52px;color:#dcdcdc;'>:</span> <span style='margin-left:-0.57px;color:#4ec9b0;letter-spacing:-0.010px;'>Blade</span> <span style='margin-left:-0.05px;color:#b4b4b4;'>@</span><span style='margin-left:-1.02px;color:#b5cea8;letter-spacing:0.071px;'>0400000F</span></div>
<div class="ln" style="left:273.70px;top:626.50px;font-size:28px;line-height:42px"><span style='color:#ae6ff5;letter-spacing:0.615px;'>decryptedTextDisplay</span> <span style='color:#dcdcdc;'>:</span> <span style='margin-left:-0.47px;color:#4ec9b0;letter-spacing:0.909px;'>Text</span> <span style='margin-left:-0.78px;color:#b4b4b4;'>@</span><span style='margin-left:-0.42px;color:#b5cea8;letter-spacing:0.285px;'>04000013</span></div>
<div class="ln" style="left:273.70px;top:665.50px;font-size:28px;line-height:42px"><span style='color:#8a8acb;letter-spacing:0.438px;'>encryptedHexData</span> <span style='margin-left:0.40px;color:#dcdcdc;'>:</span> <span style='margin-left:0.63px;color:#569cd6;letter-spacing:0.981px;'>string</span> <span style='margin-left:-1.14px;color:#b4b4b4;'>@</span><span style='margin-left:-0.92px;color:#b5cea8;letter-spacing:0.142px;'>04000017</span></div>
<div class="ln" style="left:273.70px;top:704.50px;font-size:28px;line-height:42px"><span style='color:#8a8acb;letter-spacing:0.514px;'>encryptionKey</span> <span style='margin-left:0.10px;color:#dcdcdc;'>:</span> <span style='margin-left:0.53px;color:#569cd6;letter-spacing:0.961px;'>string</span> <span style='margin-left:-0.62px;color:#b4b4b4;'>@</span><span style='margin-left:-1.42px;color:#b5cea8;letter-spacing:0.285px;'>04000015</span></div>
<div class="ln" style="left:274.00px;top:743.50px;font-size:28px;line-height:42px"><span style='color:#ae6ff5;letter-spacing:0.582px;'>fadeImage</span> <span style='margin-left:-1.14px;color:#dcdcdc;'>:</span> <span style='margin-left:0.13px;color:#4ec9b0;letter-spacing:0.613px;'>Image</span> <span style='margin-left:-0.37px;color:#b4b4b4;'>@</span><span style='margin-left:-1.12px;color:#b5cea8;letter-spacing:0.328px;'>04000012</span></div>
<div class="ln" style="left:274.60px;top:782.50px;font-size:28px;line-height:42px"><span style='color:#8a8acb;letter-spacing:-0.621px;'>iv</span> <span style='margin-left:0.63px;color:#dcdcdc;'>:</span> <span style='margin-left:0.43px;color:#569cd6;letter-spacing:0.881px;'>string</span> <span style='margin-left:-0.54px;color:#b4b4b4;'>@</span><span style='margin-left:-0.82px;color:#b5cea8;letter-spacing:0.342px;'>04000016</span></div>
<div class="ln" style="left:274.00px;top:821.50px;font-size:28px;line-height:42px"><span style='color:#ae6ff5;letter-spacing:0.295px;'>scoreText</span> <span style='margin-left:0.24px;color:#dcdcdc;'>:</span> <span style='margin-left:-0.17px;color:#4ec9b0;letter-spacing:0.809px;'>Text</span> <span style='margin-left:-0.28px;color:#b4b4b4;'>@</span><span style='margin-left:-1.22px;color:#b5cea8;letter-spacing:0.282px;'>04000011</span></div>
<div class="ln" style="left:274.00px;top:860.50px;font-size:28px;line-height:42px"><span style='color:#ae6ff5;letter-spacing:0.265px;'>spawner</span> <span style='margin-left:0.02px;color:#dcdcdc;'>:</span> <span style='margin-left:-0.77px;color:#4ec9b0;letter-spacing:0.102px;'>Spawner</span> <span style='margin-left:0.39px;color:#b4b4b4;'>@</span><span style='margin-left:-1.22px;color:#b5cea8;letter-spacing:0.356px;'>04000010</span></div>
<div class="ln" style="left:231.00px;top:899.50px;font-size:28px;line-height:42px"><span style='color:#4ec9b0;letter-spacing:0.186px;'>Spawner</span> <span style='margin-left:0.10px;color:#b4b4b4;'>@</span><span style='margin-left:-1.42px;color:#b5cea8;letter-spacing:0.428px;'>02000006</span></div>
</div>
<div id="editor">
<div class="c" style="left:865px;top:130.95px;color:#2b91af">1</div>
<div class="c" style="left:902.8px;top:130.95px"><span style="color:#57a64a">// GameManager</span></div>
<div class="c" style="left:865px;top:157.15px;color:#2b91af">2</div>
<div class="c" style="left:902.8px;top:157.15px"><span style="color:#57a64a">// Token: 0x04000017 RID: 23</span></div>
<div class="c" style="left:865px;top:182.15px;color:#2b91af">3</div>
<div class="c" style="left:902.8px;top:182.15px"><span style="color:#569cd6">private static readonly string</span><span style="color:#dcdcdc"> </span><span style="color:#8a8acb">encryptedHexData</span><span style="color:#b4b4b4"> = </span><span style="color:#d69d85">&quot;cecadff28e93aa5d6f65128ae33e734d3f47b4b8a050d326c534a732d51b96e2a6a80dca0d5a704a216c2e0c3cc6aaaf&quot;</span><span style="color:#dcdcdc">;</span></div>
<div class="c" style="left:865px;top:202.95px;color:#2b91af">4</div>
</div>
</body></html>
